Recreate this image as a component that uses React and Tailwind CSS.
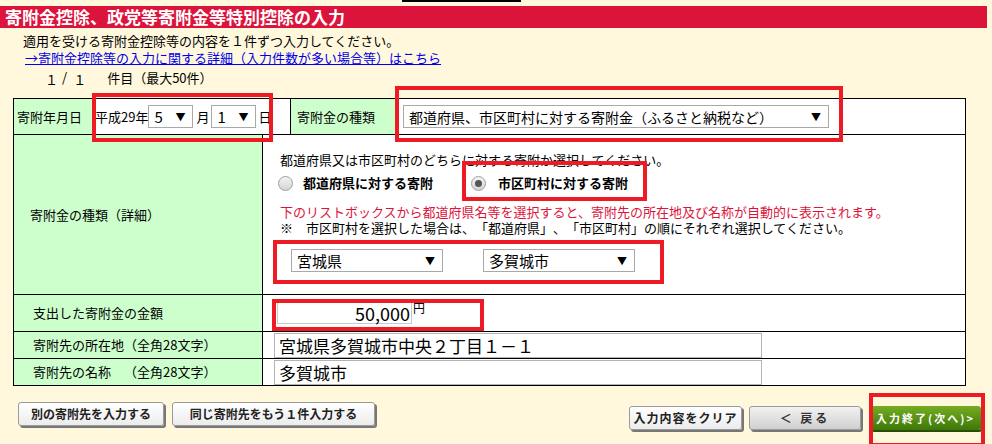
const font = { fontFamily: "'Noto Sans CJK JP', 'Noto Sans', sans-serif" }

function FakeSelect({ value, className }) {
  return (
    <div
      className={`flex items-center justify-between border border-[#a9a9a9] bg-white pl-[5px] pr-[7px] text-[14px] leading-none text-black ${className}`}
    >
      <span>{value}</span>
      <span className="text-[10px]">▼</span>
    </div>
  )
}

function Radio({ checked }) {
  return (
    <span className="flex h-[15px] w-[15px] items-center justify-center rounded-full border border-[#a0a0a0] bg-gradient-to-b from-[#f4f4f4] to-[#d4d4d4]">
      {checked && <span className="h-[7px] w-[7px] rounded-full bg-[#555]" />}
    </span>
  )
}

function WhiteButton({ children, className }) {
  return (
    <div
      className={`flex h-[24px] items-center justify-center whitespace-nowrap rounded-[3px] border border-[#9a9a9a] bg-gradient-to-b from-white to-[#ececec] text-[12px] font-bold text-[#222] shadow-[2px_2px_0_0_#777] ${className}`}
    >
      {children}
    </div>
  )
}

// 赤枠の注釈
function RedBox({ className }) {
  return <div className={`pointer-events-none absolute border-4 border-[#ed1c24] ${className}`} />
}

export default function App() {
  return (
    <div
      className="relative h-[444px] w-[992px] overflow-hidden bg-[#fff8dc] text-black [text-spacing-trim:space-all]"
      style={font}
    >
      <div className="ml-[402px] h-[2px] w-[119px] bg-black" />
      <div className="mt-[4px] h-[22px] w-[987px] bg-[#dc143c] pl-[5px] text-[17px] font-bold leading-[22px] text-white">
        寄附金控除、政党等寄附金等特別控除の入力
      </div>

      <p className="mt-[5px] pl-[23px] text-[13px] leading-[16px]">
        適用を受ける寄附金控除等の内容を１件ずつ入力してください。
      </p>
      <p className="mt-[1px] pl-[25px] text-[13px] leading-[16px]">
        <a className="text-[#0000ee] underline">→寄附金控除等の入力に関する詳細（入力件数が多い場合等）はこちら</a>
      </p>
      <div className="mt-[4px] flex items-end pl-[45px] text-[13px] leading-[16px]">
        <span className="translate-y-[2px]">１</span>
        <span className="ml-[4px] -translate-y-[1px]">/</span>
        <span className="ml-[6px] translate-y-[2px]">１</span>
        <span className="ml-[21px]">件目（最大50件）</span>
      </div>

      {/* 入力テーブル */}
      <div className="ml-[13px] mt-[12px] w-[953px] border border-black text-[13px]">
        <div className="flex h-[36px] border-b border-black">
          <div className="flex w-[79px] items-center border-r border-black bg-[#ccffcc] pl-[3px]">寄附年月日</div>
          <div className="flex w-[198px] items-center border-r border-black bg-white pl-[2px]">
            <span>平成29年</span>
            <FakeSelect value="5" className="h-[23px] w-[45px] text-[15px]" />
            <span className="ml-[3px]">月</span>
            <FakeSelect value="1" className="ml-[2px] h-[23px] w-[45px] text-[15px]" />
            <span className="ml-[2px]">日</span>
          </div>
          <div className="flex w-[107px] items-center border-r border-black bg-[#ccffcc] pl-[6px]">寄附金の種類</div>
          <div className="flex flex-1 items-center bg-white pl-[5px]">
            <FakeSelect value="都道府県、市区町村に対する寄附金（ふるさと納税など）" className="h-[23px] w-[426px]" />
          </div>
        </div>

        <div className="flex h-[160px] border-b border-black">
          <div className="flex w-[249px] items-center border-r border-black bg-[#ccffcc] pl-[16px]">寄附金の種類（詳細）</div>
          <div className="flex-1 bg-white pl-[17px] pt-[17px] leading-[16px]">
            <p>都道府県又は市区町村のどちらに対する寄附か選択してください。</p>
            <div className="mt-[7px] flex items-center">
              <span className="-ml-[2px]"><Radio /></span>
              <span className="ml-[10px] font-bold">都道府県に対する寄附</span>
              <span className="ml-[38px]"><Radio checked /></span>
              <span className="ml-[12px] font-bold">市区町村に対する寄附</span>
            </div>
            <p className="mt-[13px] leading-[16px] text-[#dc143c]">
              下のリストボックスから都道府県名等を選択すると、寄附先の所在地及び名称が自動的に表示されます。
            </p>
            <p className="leading-[16px]">※　市区町村を選択した場合は、「都道府県」、「市区町村」の順にそれぞれ選択してください。</p>
            <div className="ml-[11px] mt-[13px] flex gap-[40px]">
              <FakeSelect value="宮城県" className="h-[23px] w-[152px] text-[15px]" />
              <FakeSelect value="多賀城市" className="h-[23px] w-[152px] text-[15px]" />
            </div>
          </div>
        </div>

        <div className="flex h-[37px] border-b border-black">
          <div className="flex w-[249px] items-center border-r border-black bg-[#ccffcc] pl-[19px]">支出した寄附金の金額</div>
          <div className="flex flex-1 items-start bg-white pl-[14px] pt-[6px]">
            <div className="flex h-[23px] w-[135px] items-center justify-end border border-[#c8c8c8] bg-white pr-[1px] text-[18px] leading-none">
              50,000
            </div>
            <span className="ml-[1px] text-[12px] leading-[14px]">円</span>
          </div>
        </div>

        <div className="flex h-[27px] border-b border-black">
          <div className="flex w-[249px] items-center border-r border-black bg-[#ccffcc] pl-[19px]">寄附先の所在地（全角28文字）</div>
          <div className="flex flex-1 items-center bg-white pl-[11px]">
            <div className="flex h-[25px] w-[488px] items-center border border-[#b4b4b4] pl-[4px] text-[17px] leading-none">
              宮城県多賀城市中央２丁目１－１
            </div>
          </div>
        </div>

        <div className="flex h-[26px]">
          <div className="flex w-[249px] items-center border-r border-black bg-[#ccffcc] pl-[19px]">寄附先の名称　（全角28文字）</div>
          <div className="flex flex-1 items-center bg-white pl-[11px]">
            <div className="flex h-[25px] w-[488px] items-center border border-[#b4b4b4] pl-[4px] text-[17px] leading-none">
              多賀城市
            </div>
          </div>
        </div>
      </div>

      {/* 下部ボタン */}
      <div className="mt-[16px] flex items-start">
        <WhiteButton className="ml-[18px] w-[146px]">別の寄附先を入力する</WhiteButton>
        <WhiteButton className="ml-[8px] w-[203px]">同じ寄附先をもう１件入力する</WhiteButton>
        <div className="ml-[254px] mt-[4px] flex items-start">
          <WhiteButton className="w-[113px] text-[11px] tracking-[1px]">入力内容をクリア</WhiteButton>
          <div className="ml-[7px] flex h-[24px] w-[112px] items-center justify-center whitespace-nowrap rounded-[3px] border border-[#9a9a9a] bg-gradient-to-b from-[#f2f2f2] to-[#d0d0d0] text-[12px] font-bold tracking-[3px] text-[#333] shadow-[2px_2px_0_0_#777]">
            ＜ 戻る
          </div>
          <div className="ml-[9px] flex h-[24px] w-[111px] items-center justify-center whitespace-nowrap rounded-[3px] bg-gradient-to-b from-[#76ac22] to-[#3d7808] text-[11px] font-bold tracking-[2px] text-white shadow-[1px_2px_0_0_#2a4d06]">
            入力終了(次へ)&gt;
          </div>
        </div>
      </div>

      <RedBox className="left-[92px] top-[93px] h-[49px] w-[181px]" />
      <RedBox className="left-[395px] top-[86px] h-[56px] w-[448px]" />
      <RedBox className="left-[462px] top-[161px] h-[40px] w-[185px]" />
      <RedBox className="left-[273px] top-[240px] h-[44px] w-[391px]" />
      <RedBox className="left-[272px] top-[299px] h-[32px] w-[212px]" />
      <RedBox className="left-[869px] top-[393px] h-[54px] w-[116px]" />
    </div>
  )
}
